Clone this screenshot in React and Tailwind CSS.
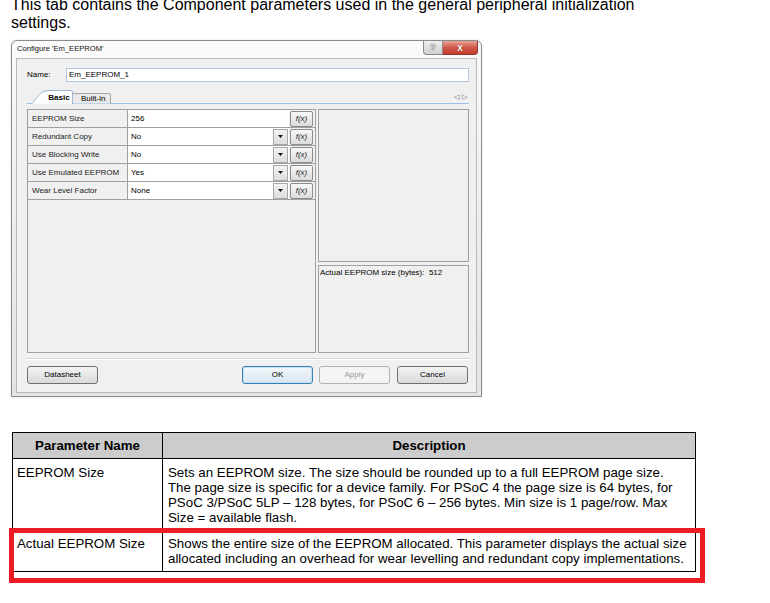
import React from "react";

const rows = [
  { label: "EEPROM Size", value: "256", dd: false },
  { label: "Redundant Copy", value: "No", dd: true },
  { label: "Use Blocking Write", value: "No", dd: true },
  { label: "Use Emulated EEPROM", value: "Yes", dd: true },
  { label: "Wear Level Factor", value: "None", dd: true },
];

function Fx() {
  return (
    <div className="ml-[1px] mt-[1px] flex h-[16px] w-[23px] items-center justify-center rounded-[2px] border border-[#8c8c8c] bg-gradient-to-b from-[#f8f8f8] to-[#dcdcdc] text-[8px] italic text-[#222]">
      f(x)
    </div>
  );
}

function Btn({ children, kind }) {
  const base =
    "flex h-[18px] w-[71px] items-center justify-center rounded-[3px] border text-[8px]";
  if (kind === "ok")
    return (
      <div className={base + " ml-auto border-[#3c7fb1] bg-gradient-to-b from-[#f2f7fb] to-[#d9e6f0] text-black shadow-[inset_0_0_0_1px_#bfe0f5]"}>
        {children}
      </div>
    );
  if (kind === "dis")
    return (
      <div className={base + " ml-[6px] border-[#adb2b5] bg-[#f4f4f4] text-[#9a9a9a]"}>
        {children}
      </div>
    );
  if (kind === "cancel")
    return (
      <div className={base + " ml-[7px] mr-[1px] border-[#707070] bg-gradient-to-b from-[#f3f3f3] to-[#dadada] text-black"}>
        {children}
      </div>
    );
  return (
    <div className={base + " border-[#707070] bg-gradient-to-b from-[#f3f3f3] to-[#dadada] text-black"}>
      {children}
    </div>
  );
}

export default function App() {
  return (
    <div className="relative h-[603px] w-[770px] overflow-hidden bg-white font-['Liberation_Sans',Arial,sans-serif] text-black">
      <p className="ml-[11px] mt-[-4px] text-[16px] leading-[18px]">
        This tab contains the Component parameters used in the general peripheral initialization
        <br />
        settings.
      </p>

      {/* Dialog */}
      <div className="ml-[11px] mt-[8px] flex h-[357px] w-[471px] flex-col rounded-t-[6px] border border-[#8a8a8a] bg-gradient-to-b from-[#fbfbfb] via-[#eeeeee] to-[#e4e4e4] shadow-[0_0_2px_rgba(0,0,0,0.15)]">
        <div className="flex h-[17px] items-start justify-between">
          <div className="pl-[5px] pt-[3px] text-[7.6px] leading-[10px] text-[#111]">
            Configure 'Em_EEPROM'
          </div>
          <div className="mr-[3px] flex">
            <div className="flex h-[14px] w-[20px] items-center justify-center rounded-bl-[4px] border border-t-0 border-[#8a8a8a] bg-gradient-to-b from-[#f0f0f0] to-[#cfcfcf] text-[9px] font-bold text-[#f8f8f8] [text-shadow:0_0_1px_#333,0_0_1px_#333]">
              ?
            </div>
            <div className="flex h-[14px] w-[35px] items-center justify-center rounded-br-[4px] border border-l-0 border-t-0 border-[#8a3a30] bg-gradient-to-b from-[#e8a395] via-[#d0584a] to-[#c43c2a] text-[10px] font-bold leading-none text-white [text-shadow:0_0_1px_#600]">
              x
            </div>
          </div>
        </div>

        <div className="mx-[4px] flex h-[335px] flex-col border border-[#b9b9b9] bg-[#f0f0f0] pl-[10px] pr-[7px] text-[8px] leading-[10px]">
          {/* Name row */}
          <div className="mt-[9px] flex h-[14px] items-center">
            <div className="w-[39px]">Name:</div>
            <div className="flex h-[14px] flex-1 items-center border border-[#b5c6d9] bg-white pl-[2px]">
              Em_EEPROM_1
            </div>
          </div>

          {/* Tabs */}
          <div className="relative mt-[8px] flex h-[14px]">
            <svg className="absolute inset-0" width="442" height="14" viewBox="0 0 442 14">
              <path d="M0 13.5 L5 13.5 M45 13.5 L442 13.5" stroke="#99c0e8" strokeWidth="1" fill="none" />
              <path d="M45 13.5 L45 3.5 L82 3.5 Q83.5 3.5 83.5 5 L83.5 13.5" fill="#e9e9e9" stroke="#a6a6a6" strokeWidth="1" />
              <path d="M5 13.5 C9 9 13 1 21 0.5 L44 0.5 Q45.5 0.5 45.5 2 L45.5 14" fill="#fdfdfd" stroke="#9cb6d3" strokeWidth="1" />
            </svg>
            <div className="relative ml-[19px] flex w-[26px] items-center justify-center pt-[1px] font-bold">
              Basic
            </div>
            <div className="relative ml-[9px] flex items-center pt-[3px]">Built-in</div>
            <div className="relative ml-auto mr-[2px] flex items-center gap-[3px] pt-[0px] text-[7px] text-[#555]">
              <span>◁</span>
              <span>▷</span>
            </div>
          </div>

          {/* Main area */}
          <div className="mt-[5px] flex h-[244px] gap-[2px]">
            <div className="w-[289px] border border-[#a0a0a0]">
              {rows.map((r) => (
                <div key={r.label} className="box-border flex h-[18px] border-b border-[#a0a0a0]">
                  <div className="box-border flex w-[100px] items-center border-r border-[#a0a0a0] pl-[4px] text-[#222]">
                    {r.label}
                  </div>
                  <div className="flex w-[161px] items-center bg-white pl-[3px]">
                    <span className="flex-1">{r.value}</span>
                    {r.dd && (
                      <div className="mr-[1px] flex h-[16px] w-[15px] items-center justify-center border border-[#a8a8a8] bg-gradient-to-b from-[#f2f2f2] to-[#dedede]">
                        <svg width="5" height="3" viewBox="0 0 5 3">
                          <path d="M0 0 L5 0 L2.5 3 Z" fill="#111" />
                        </svg>
                      </div>
                    )}
                  </div>
                  <div className="w-[26px]">
                    <Fx />
                  </div>
                </div>
              ))}
            </div>
            <div className="flex w-[151px] flex-col gap-[3px]">
              <div className="h-[153px] border border-[#a0a0a0]"></div>
              <div className="h-[88px] border border-[#a0a0a0] pl-[1px] pt-[2px]">
                Actual EEPROM size (bytes):&nbsp; 512
              </div>
            </div>
          </div>

          <div className="mt-[5px] h-[1px] bg-[#d5d5d5] shadow-[0_1px_0_#ffffff]"></div>

          <div className="mt-[7px] flex">
            <Btn>Datasheet</Btn>
            <Btn kind="ok">OK</Btn>
            <Btn kind="dis">Apply</Btn>
            <Btn kind="cancel">Cancel</Btn>
          </div>
        </div>
      </div>

      {/* Parameter table */}
      <div className="ml-[12px] mt-[35px] w-[684px] border border-black text-[13.3px] leading-[15px]">
        <div className="box-border flex h-[26px] border-b border-black bg-[#cccccc] font-bold">
          <div className="box-border flex w-[150px] items-center justify-center border-r border-black">
            Parameter Name
          </div>
          <div className="flex flex-1 items-center justify-center">Description</div>
        </div>
        <div className="box-border flex h-[70px] border-b border-black">
          <div className="box-border w-[150px] border-r border-black pl-[4px] pt-[6px]">EEPROM Size</div>
          <div className="flex-1 whitespace-nowrap pl-[5px] pt-[6px]">
            Sets an EEPROM size. The size should be rounded up to a full EEPROM page size.
            <br />
            The page size is specific for a device family. For PSoC 4 the page size is 64 bytes, for
            <br />
            PSoC 3/PSoC 5LP – 128 bytes, for PSoC 6 – 256 bytes. Min size is 1 page/row. Max
            <br />
            Size = available flash.
          </div>
        </div>
        <div className="flex h-[42px]">
          <div className="box-border w-[150px] border-r border-black pl-[4px] pt-[7px]">Actual EEPROM Size</div>
          <div className="flex-1 whitespace-nowrap pl-[5px] pt-[7px]">
            Shows the entire size of the EEPROM allocated. This parameter displays the actual size
            <br />
            allocated including an overhead for wear levelling and redundant copy implementations.
          </div>
        </div>
      </div>

      {/* Red highlight box */}
      <div className="pointer-events-none absolute left-[9px] top-[528px] h-[55px] w-[696px] border-[5px] border-[#ed1c24]"></div>
    </div>
  );
}
